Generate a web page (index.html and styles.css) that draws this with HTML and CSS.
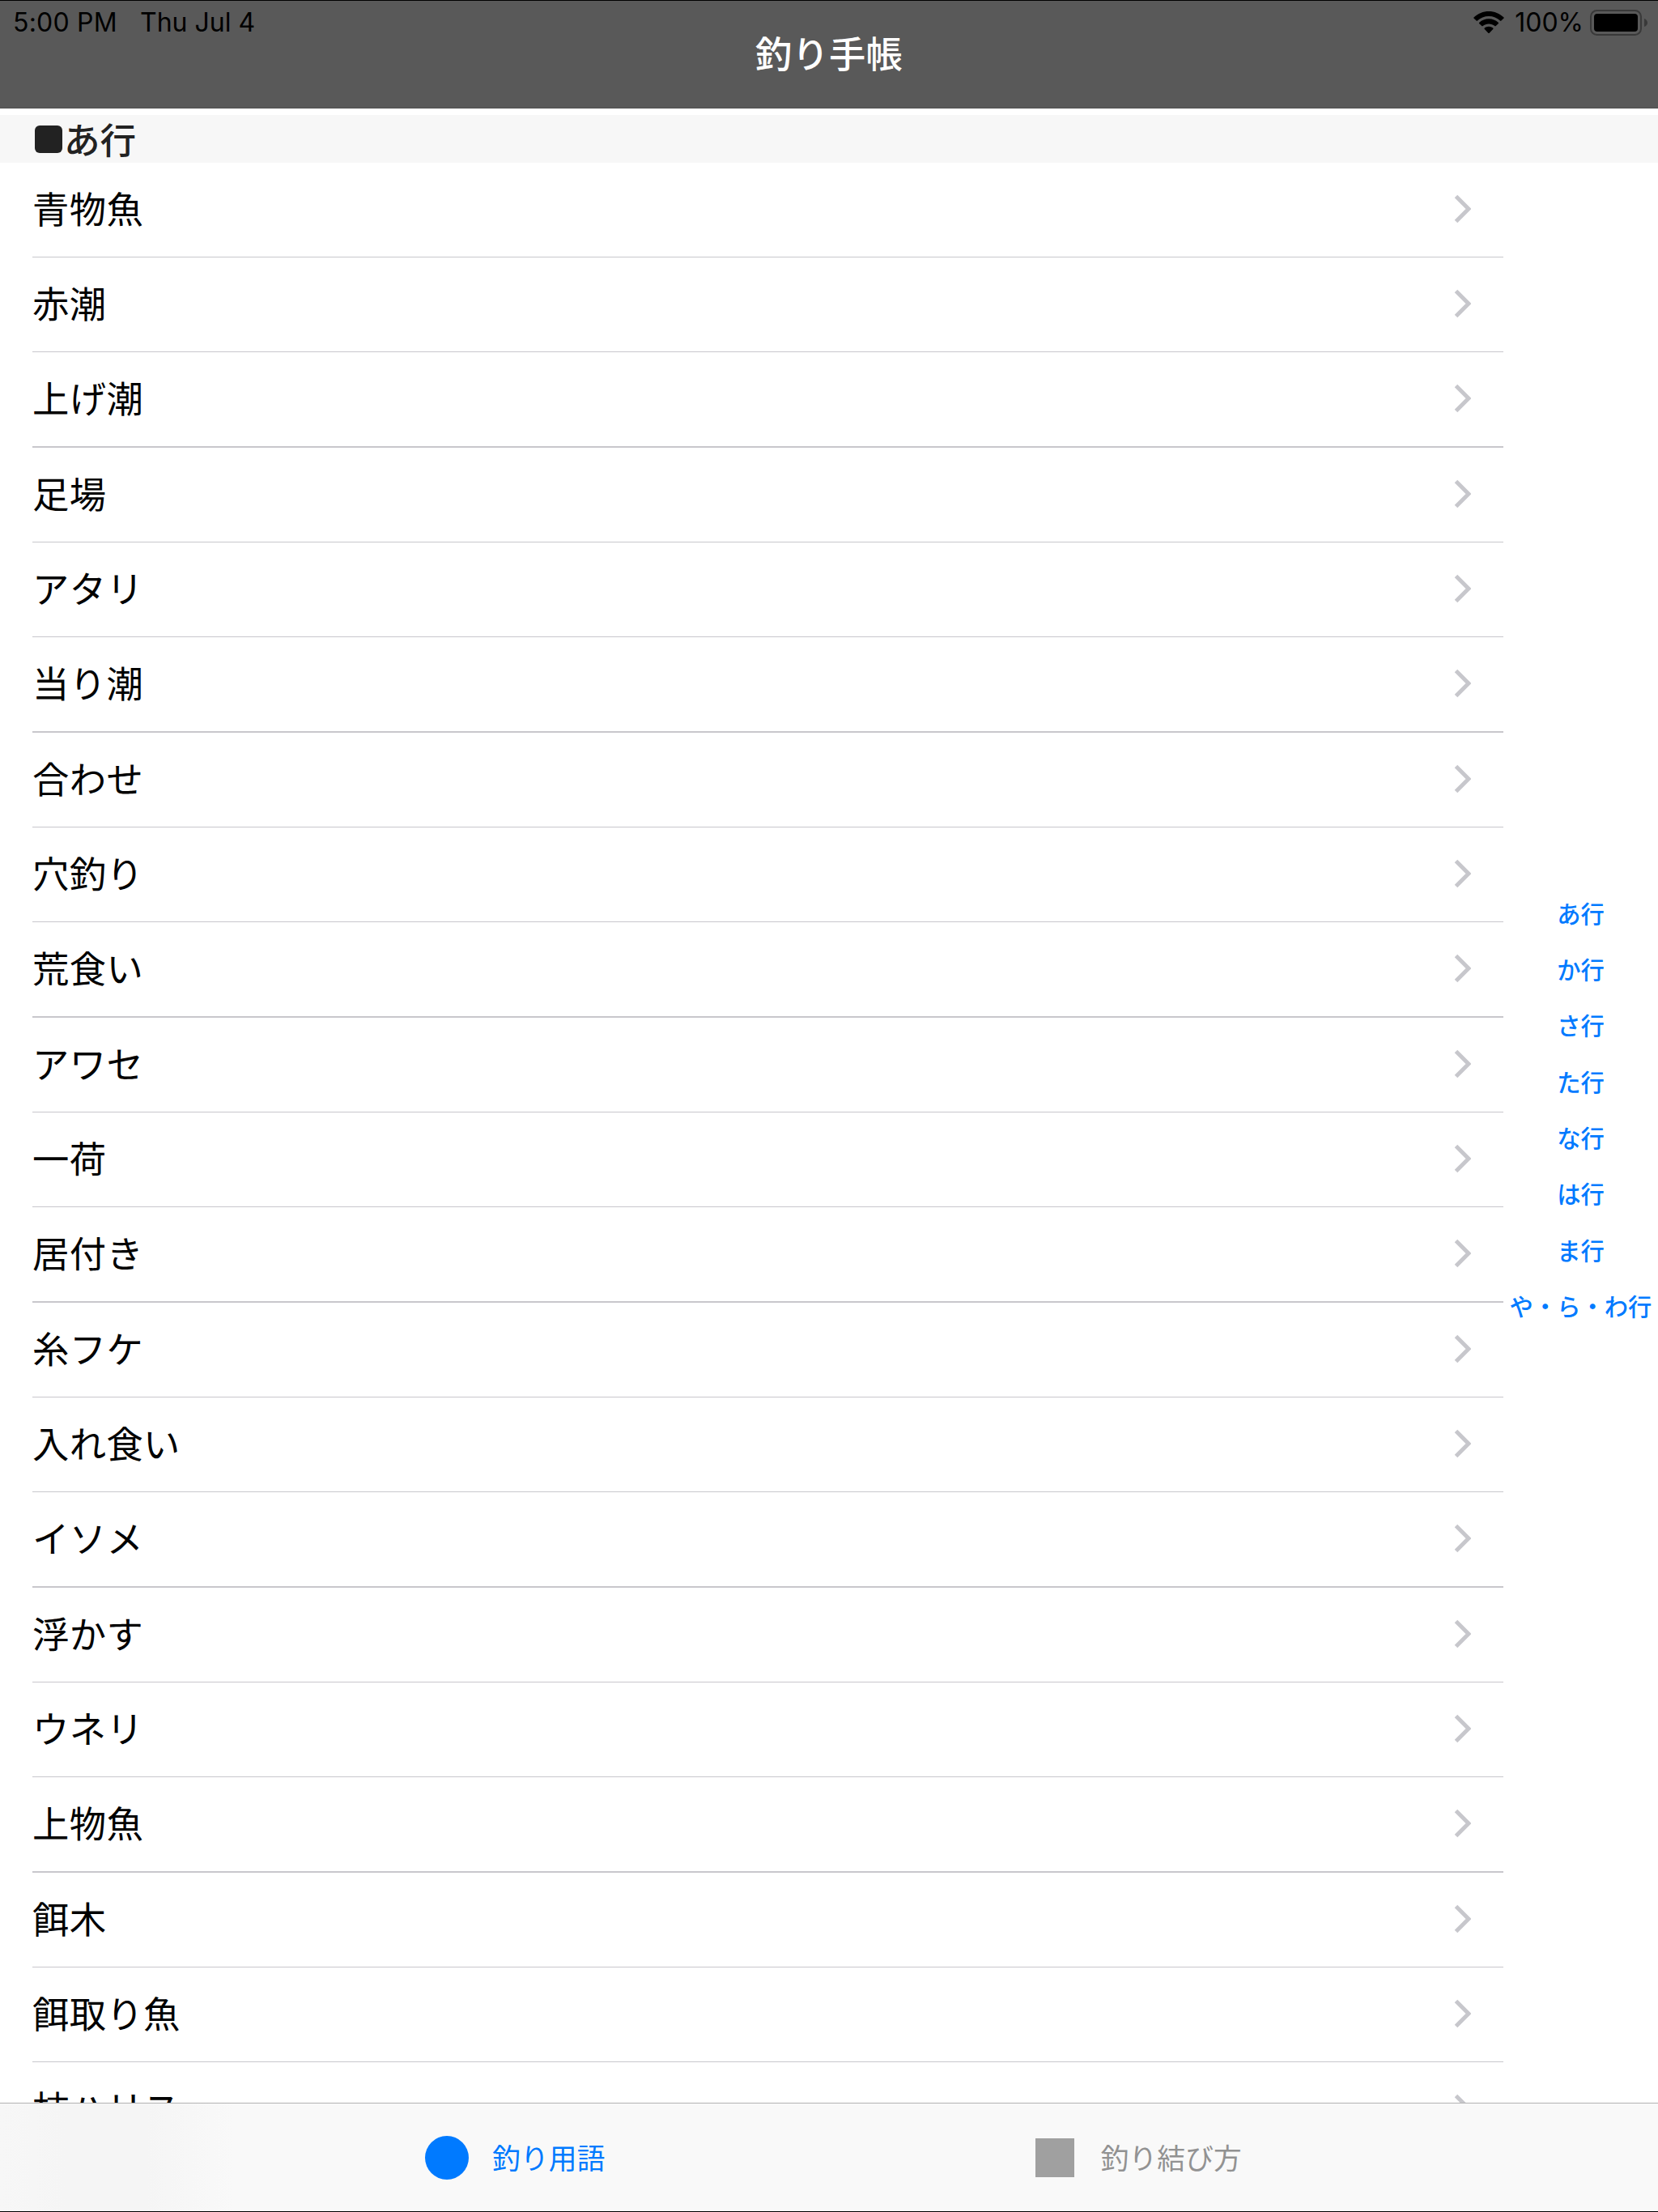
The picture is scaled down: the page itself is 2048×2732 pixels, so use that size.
FILE: index.html
```html
<!DOCTYPE html>
<html lang="ja">
<head>
    <meta charset="UTF-8">
    <meta name="viewport" content="width=device-width, initial-scale=1.0">
    <title>釣り手帳</title>
    <link rel="stylesheet" href="styles.css">
</head>
<body>
    <header class="nav-bar">
        <div class="status-bar">
            <span class="time">5:00 PM</span>
            <span class="date">Thu Jul 4</span>
            <svg class="wifi" width="38" height="28" viewBox="0 0 38 28">
                <path d="M19 0C12 0 5.600 2.700.7 7.300a1 1 0 0 0 0 1.500l2.900 2.800a1 1 0 0 0 1.400 0C8.700 8.100 13.600 6.100 19 6.100s10.300 2 14 5.500a1 1 0 0 0 1.400 0l2.900-2.800a1 1 0 0 0 0-1.500C32.400 2.700 26 0 19 0z"/>
                <path d="M19 9.300c-4.500 0-8.600 1.700-11.700 4.500a1 1 0 0 0 0 1.500l3 2.800a1 1 0 0 0 1.400 0c2-1.700 4.500-2.700 7.300-2.700s5.300 1 7.300 2.700a1 1 0 0 0 1.400 0l3-2.800a1 1 0 0 0 0-1.500A17.400 17.400 0 0 0 19 9.300z"/>
                <path d="M19 18.700c-2 0-3.800.7-5.200 1.800a1 1 0 0 0 0 1.500l4.500 4.700a1 1 0 0 0 1.400 0l4.500-4.700a1 1 0 0 0 0-1.500A8.400 8.400 0 0 0 19 18.700z"/>
            </svg>
            <span class="percent">100%</span>
            <svg class="battery" width="72" height="32" viewBox="0 0 72 32">
                <rect x="1" y="1" width="62" height="30" rx="7.500" fill="none" stroke="#393939" stroke-width="2"/>
                <rect x="5" y="5" width="54" height="22" rx="4"/>
                <path d="M67 11c2.500.8 4 2.700 4 5s-1.500 4.200-4 5z" fill="#393939"/>
            </svg>
        </div>
        <h1>釣り手帳</h1>
    </header>

    <main>
        <h2 class="section-title"><span class="square">■</span>あ行</h2>
        <div class="content">
            <ul class="word-list" id="word-list"></ul>
            <nav class="index">
                <a>あ行</a>
                <a>か行</a>
                <a>さ行</a>
                <a>た行</a>
                <a>な行</a>
                <a>は行</a>
                <a>ま行</a>
                <a>や・ら・わ行</a>
            </nav>
        </div>
    </main>

    <footer class="tab-bar">
        <div class="tab active">
            <span class="tab-icon circle"></span>
            <span>釣り用語</span>
        </div>
        <div class="tab">
            <span class="tab-icon"></span>
            <span>釣り結び方</span>
        </div>
    </footer>

    <script>
        const words = [
            "青物魚", "赤潮", "上げ潮", "足場", "アタリ", "当り潮", "合わせ",
            "穴釣り", "荒食い", "アワセ", "一荷", "居付き", "糸フケ", "入れ食い",
            "イソメ", "浮かす", "ウネリ", "上物魚", "餌木", "餌取り魚", "枝ハリス"
        ];

        const chevron = '<svg class="chevron" width="22" height="36" viewBox="0 0 22 36">' +
            '<path d="M3.500 2.500L19 18L3.500 33.500"/></svg>';

        document.getElementById('word-list').innerHTML = words
            .map(word => `<li><span>${word}</span>${chevron}</li>`)
            .join('');
    </script>
</body>
</html>
```
FILE: styles.css
```css
* {
    box-sizing: border-box;
}
body {
    font-family: "Noto Sans CJK JP", sans-serif;
    margin: 0;
    height: 2732px;
    display: flex;
    flex-direction: column;
    overflow: hidden;
    background: #fff;
    color: #000;
}
h1, h2, ul {
    margin: 0;
    padding: 0;
}
.nav-bar {
    flex: none;
    height: 134px;
    background: #595959;
    border-top: 1px solid #000;
    border-bottom: 1px solid #4f4f4f;
}
.status-bar {
    display: flex;
    align-items: center;
    height: 53px;
    padding: 0 12px 0 16px;
    font-family: Inter, sans-serif;
    font-size: 32px;
    line-height: 53px;
}
.time {
    width: 157px;
    letter-spacing: 0.2px;
}
.wifi {
    margin-left: auto;
}
.percent {
    margin: 0 8px 0 13px;
}
.nav-bar h1 {
    margin-top: -23px;
    font-size: 45.3px;
    font-weight: 500;
    line-height: 66px;
    text-align: center;
    letter-spacing: 0.3px;
    color: #fff;
}
main {
    flex: 1;
    min-height: 0;
    padding-top: 8px;
    overflow: hidden;
}
.section-title {
    display: flex;
    align-items: center;
    height: 58.67px;
    padding-left: 43px;
    background: #f7f7f7;
    color: #222;
    font-size: 44.6px;
    font-weight: 500;
    line-height: 56px;
}
.section-title::after {
    content: "";
}
.square {
    width: 34px;
    height: 34px;
    margin: 2px 2px 0 0;
    border-radius: 6px;
    background: #222;
    font-size: 24px;
    line-height: 32px;
    text-align: center;
}
.content {
    display: flex;
}
.word-list {
    width: 1817px;
    margin-left: 40px;
    list-style: none;
}
.word-list li {
    display: flex;
    align-items: center;
    justify-content: space-between;
    height: 117.333px;
    padding: 0 40px 2px 0;
    border-bottom: 1px solid #c8c7cc;
    font-size: 45.3px;
    line-height: 66px;
    letter-spacing: 0.4px;
}
.word-list li:nth-child(3n) {
    padding-bottom: 1px;
    border-bottom-width: 2px;
}
.word-list span {
    padding-bottom: 4px;
}
.chevron {
    fill: none;
    stroke: #c7c7cc;
    stroke-width: 5;
}
.index {
    flex: 1;
    padding-top: 892px;
    font-size: 29.3px;
    font-weight: 500;
    text-align: center;
    color: #007aff;
}
.index a {
    display: block;
    height: 69.33px;
    line-height: 69.33px;
    white-space: nowrap;
}
.tab-bar {
    flex: none;
    display: flex;
    height: 135px;
    padding-left: 525px;
    border-top: 1px solid #b2b2b2;
    border-bottom: 1px solid #000;
    background: linear-gradient(90deg, #f7f7f7, #f5f5f5 80px, #f5f5f5 180px, #f9f9f9 290px);
    color: #929292;
}
.tab {
    display: flex;
    align-items: center;
    padding-top: 1px;
    font-size: 34.7px;
    line-height: 50px;
    letter-spacing: 0.2px;
}
.tab span:last-child {
    padding-bottom: 2px;
}
.tab.active {
    width: 753.5px;
    color: #007aff;
}
.tab-icon {
    width: 48px;
    height: 48px;
    margin-right: 33px;
    background: #a0a0a0;
}
.tab-icon.circle {
    width: 54px;
    height: 54px;
    margin-right: 29px;
    border-radius: 50%;
    background: #007aff;
}
```
